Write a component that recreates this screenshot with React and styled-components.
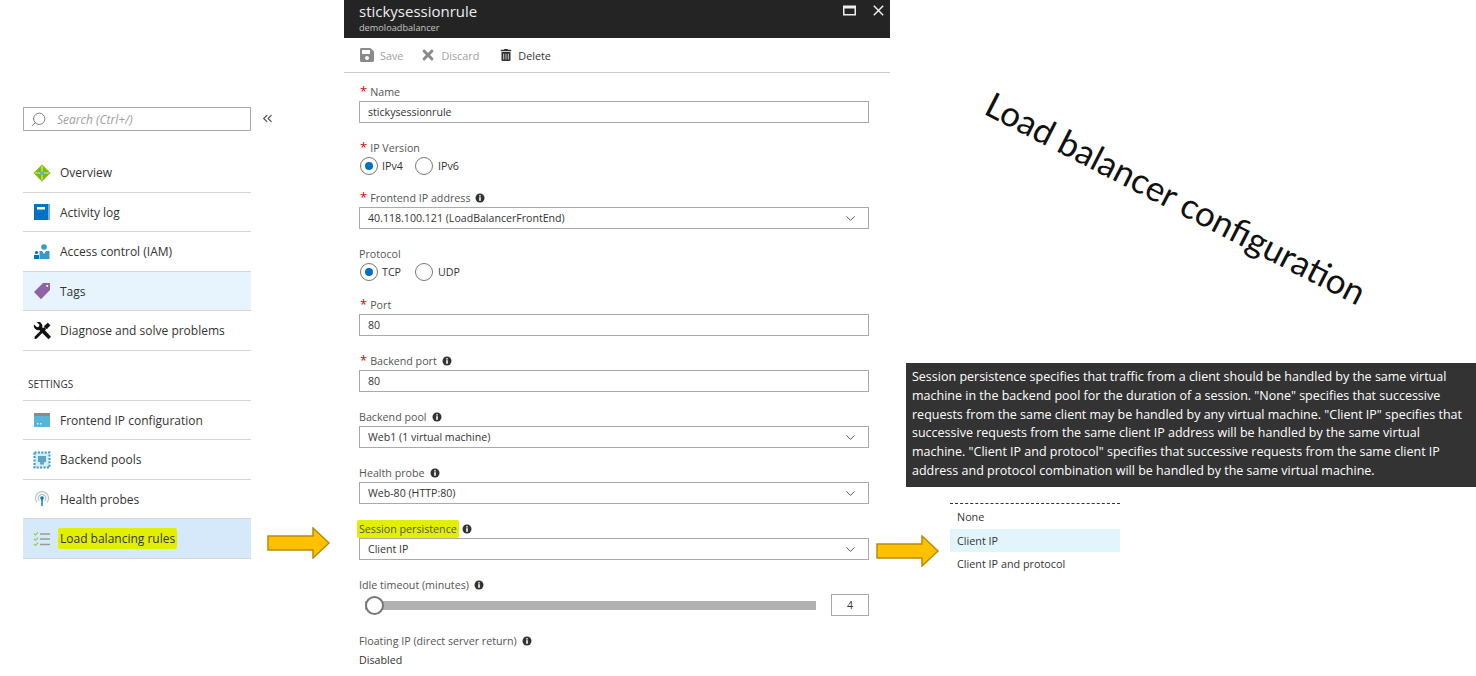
import React from 'react'
import styled, { createGlobalStyle } from 'styled-components'
import { FaSave, FaTimes, FaTrashAlt } from 'react-icons/fa'
import { ChevronDown, ChevronsLeft, Search } from 'lucide-react'

const GlobalStyle = createGlobalStyle`
  html, body {
    margin: 0;
    padding: 0;
    background: #fff;
    overflow: hidden;
  }
  body {
    font-family: "Open Sans", "Liberation Sans", sans-serif;
    font-size: 12px;
    color: #333;
  }
`

const Page = styled.div`
  display: flex;
  width: 1476px;
  height: 676px;
  overflow: hidden;
`

/* left menu */
const Sidebar = styled.aside`
  width: 228px;
  margin-left: 23px;
  padding-top: 107px;
  flex: none;
`

const SearchBox = styled.div`
  display: flex;
  align-items: center;
  gap: 10px;
  height: 24px;
  padding-left: 6px;
  border: 1px solid #aaa;
  box-sizing: border-box;
  color: #a0a0a0;
  font-style: italic;
  svg { transform: scaleX(-1); color: #777; }
`

const NavList = styled.nav`
  margin-top: 22px;
`

const NavItem = styled.div`
  display: flex;
  align-items: center;
  gap: 9px;
  height: 39.5px;
  box-sizing: border-box;
  padding: 1px 0 0 10px;
  border-bottom: 1px solid #d6d6d6;
  background: ${p => p.$bg || 'transparent'};
  color: #333;
  svg { flex: none; }
`

const SectionTitle = styled.div`
  margin-top: 26px;
  height: 23px;
  padding-left: 5px;
  font-size: 10px;
  color: #333;
  border-bottom: 1px solid #d6d6d6;
`

const Marker = styled.span`
  background: #e2f000;
  padding: 2px 2px;
  margin: 0 -2px;
  border-radius: 2px;
`

/* gutter between the menu and the blade */
const Gutter = styled.div`
  width: 93px;
  flex: none;
  display: flex;
  flex-direction: column;
  padding-top: 111px;
`

const Collapse = styled.div`
  height: 16px;
  margin-left: 9px;
  color: #555;
`

const GutterArrow = styled.div`
  margin-top: 400px;
  margin-left: 16px;
`

/* blade */
const Blade = styled.main`
  width: 546px;
  flex: none;
`

const BladeHeader = styled.header`
  display: flex;
  justify-content: space-between;
  height: 38px;
  box-sizing: border-box;
  padding: 1px 6px 0 15px;
  background: #242424;
  color: #eee;
`

const BladeTitle = styled.div`
  font-size: 15px;
  line-height: 21px;
`

const BladeSub = styled.div`
  font-size: 9.2px;
  line-height: 12px;
  color: #c4c4c4;
`

const WindowButtons = styled.div`
  display: flex;
  gap: 17px;
  padding-top: 4px;
`

const Toolbar = styled.div`
  display: flex;
  align-items: center;
  height: 35px;
  box-sizing: border-box;
  padding-left: 15px;
  border-bottom: 1px solid #ccc;
`

const ToolButton = styled.div`
  display: flex;
  align-items: center;
  gap: ${p => p.$gap || 5}px;
  margin-right: ${p => p.$mr || 0}px;
  font-size: 10.8px;
  color: ${p => (p.$off ? '#a0a0a0' : '#333')};
`

const Form = styled.div`
  padding: 10px 21px 0 15px;
`

const Field = styled.div`
  position: relative;
  margin-bottom: ${p => p.$mb ?? 16}px;
`

const LabelRow = styled.div`
  display: flex;
  align-items: center;
  gap: 5px;
  height: 18px;
  font-size: 10.7px;
  color: #555;
`

const Star = styled.span`
  color: #e00000;
  font-size: 13px;
  margin: -3px -2px 0 1px;
`

const TextBox = styled.div`
  display: flex;
  align-items: center;
  justify-content: space-between;
  height: 22px;
  box-sizing: border-box;
  padding: 0 10px 1px 8px;
  border: 1px solid #aaa;
  font-size: 10.6px;
  color: #333;
  svg { color: #444; margin-top: 1px; }
`

const RadioRow = styled.div`
  display: flex;
  align-items: center;
  height: 18px;
  padding-left: 1px;
  font-size: 10.7px;
  color: #333;
`

const Radio = styled.span`
  box-sizing: border-box;
  width: 18px;
  height: 18px;
  border-radius: 50%;
  border: 1px solid #777;
  margin-right: ${p => p.$mr}px;
  display: flex;
  align-items: center;
  justify-content: center;
  &::after {
    content: '';
    width: 8px;
    height: 8px;
    border-radius: 50%;
    background: ${p => (p.$on ? '#0072c6' : 'transparent')};
  }
`

const RadioText = styled.span`
  width: ${p => p.$w}px;
`

const SliderRow = styled.div`
  display: flex;
  align-items: center;
  gap: 15px;
  height: 22px;
  padding-left: 6px;
`

const Track = styled.div`
  position: relative;
  width: 451px;
  height: 9px;
  background: #b1b1b1;
`

const Thumb = styled.span`
  position: absolute;
  left: 0;
  top: -5px;
  width: 19px;
  height: 19px;
  box-sizing: border-box;
  border-radius: 50%;
  border: 2px solid #777;
  background: #fff;
`

const NumberBox = styled.div`
  width: 38px;
  height: 22px;
  box-sizing: border-box;
  border: 1px solid #aaa;
  display: flex;
  align-items: center;
  justify-content: center;
  font-size: 10.6px;
`

const FieldValue = styled.div`
  font-size: 10.7px;
  color: #333;
  line-height: 18px;
  margin-top: 1px;
`

const SideArrow = styled.div`
  position: absolute;
  left: 517px;
  top: 15px;
`

/* right side notes */
const Notes = styled.section`
  flex: 1;
  position: relative;
  padding: 363px 0 0 16px;
`

const Heading = styled.div`
  position: absolute;
  left: 75px;
  top: 176px;
  font-family: "Lato", "Liberation Sans", sans-serif;
  font-size: 34.8px;
  line-height: 44px;
  color: #111;
  white-space: nowrap;
  transform: rotate(27.2deg);
`

const Tooltip = styled.div`
  background: #333;
  color: #fff;
  height: 124px;
  box-sizing: border-box;
  padding: 5px 6px;
  font-size: 12.5px;
  line-height: 18.8px;
  white-space: nowrap;
`

const Options = styled.div`
  width: 170px;
  margin: 16px 0 0 44px;
  border-top: 1px dashed #333;
  padding-top: 1px;
`

const Option = styled.div`
  height: 23.5px;
  line-height: 23px;
  padding-left: 7px;
  font-size: 10.8px;
  color: #333;
  background: ${p => (p.$active ? '#e2f5fc' : 'transparent')};
`

const BigArrow = () => (
  <svg width="64" height="32" viewBox="0 0 64 32" style={{ display: 'block' }}>
    <polygon points="1,9 46,9 46,1 62,16 46,31 46,23 1,23" fill="#ffc000" stroke="#b98c00" strokeWidth="1.5" />
  </svg>
)

const InfoIcon = () => (
  <svg width="10" height="10" viewBox="0 0 10 10">
    <circle cx="5" cy="5" r="4.5" fill="#333" />
    <rect x="4.2" y="4.2" width="1.6" height="3.6" fill="#fff" />
    <rect x="4.2" y="2.2" width="1.6" height="1.3" fill="#fff" />
  </svg>
)

const OverviewIcon = () => (
  <svg width="18" height="18" viewBox="0 0 18 18">
    <path d="M9 .5L17.5 9 9 17.5.5 9z" fill="#7fba00" />
    <path d="M9 2v14M2 9h14" stroke="#d9efb0" strokeWidth="1.1" />
    <circle cx="9" cy="9" r="2.1" fill="#59b4d9" />
  </svg>
)

const LogIcon = () => (
  <svg width="18" height="18" viewBox="0 0 18 18">
    <rect x="1" y="1" width="16" height="16" fill="#0072c6" />
    <rect x="15" y="1" width="2" height="16" fill="#6db3e6" />
    <rect x="4" y="4" width="8" height="2.5" fill="#fff" />
  </svg>
)

const AccessIcon = () => (
  <svg width="18" height="18" viewBox="0 0 18 18">
    <circle cx="11" cy="4" r="2.8" fill="#3999c6" />
    <path d="M6.5 16V8h2.5l2 3 2-3h3.5v8z" fill="#3999c6" />
    <circle cx="3.5" cy="9.5" r="1.6" fill="#0072c6" />
    <rect x="1" y="12" width="5" height="4" fill="#0072c6" />
  </svg>
)

const TagIcon = () => (
  <svg width="18" height="18" viewBox="0 0 18 18">
    <path d="M10 1h7v7l-9 9.2L1 10z" fill="#804998" opacity=".85" />
    <circle cx="14.2" cy="3.8" r="1.1" fill="#fff" />
  </svg>
)

const ToolsIcon = () => (
  <svg width="18" height="18" viewBox="0 0 18 18" fill="#111">
    <path d="M15.5 17.2L6.3 8a4.3 4.3 0 0 1-5.2-5.6l2.9 2.900 1.900-.6.6-1.900L3.600 0a4.300 4.300 0 0 1 5.600 5.200l8.800 9.500z" />
    <path d="M1.600 14.700L11.300 5l1.900 1.900-9.700 9.800-1.900.3z" />
    <path d="M10.800 4.300L14.800.7l2.600 2.600-3.600 3.900z" />
  </svg>
)

const FrontendIcon = () => (
  <svg width="18" height="18" viewBox="0 0 18 18">
    <rect x="1" y="2" width="16" height="14" fill="#59b4d9" />
    <rect x="1" y="2" width="16" height="3" fill="#8a8a8a" />
    <rect x="4" y="12" width="1.5" height="1.5" fill="#d8eef8" />
    <rect x="7" y="12" width="1.5" height="1.5" fill="#d8eef8" />
  </svg>
)

const PoolIcon = () => (
  <svg width="18" height="18" viewBox="0 0 18 18">
    <rect x="1.5" y="1.5" width="15" height="15" fill="#d6ecf7" stroke="#3999c6" strokeWidth="2" strokeDasharray="2 1.4" />
    <rect x="5" y="5" width="8" height="6" fill="#59a5c9" />
    <rect x="7" y="11" width="4" height="2.5" fill="#8a9aa3" />
  </svg>
)

const ProbeIcon = () => (
  <svg width="18" height="18" viewBox="0 0 18 18" fill="none">
    <path d="M4 12.5a6.6 6.6 0 1 1 10 0" stroke="#c6c6c6" strokeWidth="1.4" />
    <path d="M6.2 10.8a3.8 3.8 0 1 1 5.6 0" stroke="#b0c8d6" strokeWidth="1.4" />
    <circle cx="9" cy="8" r="1.8" fill="#0072c6" />
    <rect x="8.3" y="8" width="1.4" height="8" fill="#0072c6" />
  </svg>
)

const RulesIcon = () => (
  <svg width="18" height="18" viewBox="0 0 18 18" fill="none">
    <path d="M1 3.5l1.4 1.4L5 2.3M1 8.8l1.4 1.4L5 7.6M1 14l1.4 1.4L5 12.8" stroke="#9cc83c" strokeWidth="1.1" />
    <path d="M7 4h10M7 9h10M7 14.5h10" stroke="#9b9b9b" strokeWidth="1.5" />
  </svg>
)

const MaximizeIcon = () => (
  <svg width="13" height="11" viewBox="0 0 13 11" fill="none">
    <rect x=".75" y="1.25" width="11.5" height="8.5" stroke="#eee" strokeWidth="1.5" />
    <rect x="1" y="1" width="11" height="2.5" fill="#eee" />
  </svg>
)

const CloseIcon = () => (
  <svg width="11" height="11" viewBox="0 0 11 11" fill="none">
    <path d="M.8.8l9.4 9.4M10.2.8L.8 10.2" stroke="#eee" strokeWidth="1.5" />
  </svg>
)

const menuTop = [
  { icon: <OverviewIcon />, text: 'Overview' },
  { icon: <LogIcon />, text: 'Activity log' },
  { icon: <AccessIcon />, text: 'Access control (IAM)' },
  { icon: <TagIcon />, text: 'Tags', bg: '#e8f4fd' },
  { icon: <ToolsIcon />, text: 'Diagnose and solve problems' }
]

const menuSettings = [
  { icon: <FrontendIcon />, text: 'Frontend IP configuration' },
  { icon: <PoolIcon />, text: 'Backend pools' },
  { icon: <ProbeIcon />, text: 'Health probes' }
]

const tooltipLines = [
  'Session persistence specifies that traffic from a client should be handled by the same virtual',
  'machine in the backend pool for the duration of a session. "None" specifies that successive',
  'requests from the same client may be handled by any virtual machine. "Client IP" specifies that',
  'successive requests from the same client IP address will be handled by the same virtual',
  'machine. "Client IP and protocol" specifies that successive requests from the same client IP',
  'address and protocol combination will be handled by the same virtual machine.'
]

const Label = ({ required, info, children }) => (
  <LabelRow>
    {required && <Star>*</Star>}
    <span>{children}</span>
    {info && <InfoIcon />}
  </LabelRow>
)

const Select = ({ children }) => (
  <TextBox>
    {children}
    <ChevronDown size={15} strokeWidth={1.4} />
  </TextBox>
)

export default function App() {
  return (
    <Page>
      <GlobalStyle />
      <Sidebar>
        <SearchBox>
          <Search size={17} strokeWidth={1.3} />
          Search (Ctrl+/)
        </SearchBox>
        <NavList>
          {menuTop.map(item => (
            <NavItem key={item.text} $bg={item.bg}>
              {item.icon}
              {item.text}
            </NavItem>
          ))}
          <SectionTitle>SETTINGS</SectionTitle>
          {menuSettings.map(item => (
            <NavItem key={item.text}>
              {item.icon}
              {item.text}
            </NavItem>
          ))}
          <NavItem $bg="#d6e9fa">
            <RulesIcon />
            <Marker>Load balancing rules</Marker>
          </NavItem>
        </NavList>
      </Sidebar>

      <Gutter>
        <Collapse>
          <ChevronsLeft size={15} strokeWidth={2} />
        </Collapse>
        <GutterArrow>
          <BigArrow />
        </GutterArrow>
      </Gutter>

      <Blade>
        <BladeHeader>
          <div>
            <BladeTitle>stickysessionrule</BladeTitle>
            <BladeSub>demoloadbalancer</BladeSub>
          </div>
          <WindowButtons>
            <MaximizeIcon />
            <CloseIcon />
          </WindowButtons>
        </BladeHeader>
        <Toolbar>
          <ToolButton $off $mr={17}>
            <FaSave size={16} color="#8a8a8a" />
            Save
          </ToolButton>
          <ToolButton $off $mr={21}>
            <FaTimes size={16} color="#8a8a8a" />
            Discard
          </ToolButton>
          <ToolButton $gap={6}>
            <FaTrashAlt size={12} color="#333" />
            Delete
          </ToolButton>
        </Toolbar>
        <Form>
          <Field>
            <Label required>Name</Label>
            <TextBox>stickysessionrule</TextBox>
          </Field>
          <Field $mb={14}>
            <Label required>IP Version</Label>
            <RadioRow>
              <Radio $on $mr={4} />
              <RadioText $w={33}>IPv4</RadioText>
              <Radio $mr={5} />
              <span>IPv6</span>
            </RadioRow>
          </Field>
          <Field>
            <Label required info>Frontend IP address</Label>
            <Select>40.118.100.121 (LoadBalancerFrontEnd)</Select>
          </Field>
          <Field $mb={15}>
            <Label>Protocol</Label>
            <RadioRow>
              <Radio $on $mr={4} />
              <RadioText $w={33}>TCP</RadioText>
              <Radio $mr={5} />
              <span>UDP</span>
            </RadioRow>
          </Field>
          <Field>
            <Label required>Port</Label>
            <TextBox>80</TextBox>
          </Field>
          <Field>
            <Label required info>Backend port</Label>
            <TextBox>80</TextBox>
          </Field>
          <Field>
            <Label info>Backend pool</Label>
            <Select>Web1 (1 virtual machine)</Select>
          </Field>
          <Field>
            <Label info>Health probe</Label>
            <Select>Web-80 (HTTP:80)</Select>
          </Field>
          <Field>
            <Label info><Marker>Session persistence</Marker></Label>
            <Select>Client IP</Select>
            <SideArrow>
              <BigArrow />
            </SideArrow>
          </Field>
          <Field>
            <Label info>Idle timeout (minutes)</Label>
            <SliderRow>
              <Track>
                <Thumb />
              </Track>
              <NumberBox>4</NumberBox>
            </SliderRow>
          </Field>
          <Field $mb={0}>
            <Label info>Floating IP (direct server return)</Label>
            <FieldValue>Disabled</FieldValue>
          </Field>
        </Form>
      </Blade>

      <Notes>
        <Heading>Load balancer configuration</Heading>
        <Tooltip>
          {tooltipLines.map(line => (
            <div key={line}>{line}</div>
          ))}
        </Tooltip>
        <Options>
          <Option>None</Option>
          <Option $active>Client IP</Option>
          <Option>Client IP and protocol</Option>
        </Options>
      </Notes>
    </Page>
  )
}
